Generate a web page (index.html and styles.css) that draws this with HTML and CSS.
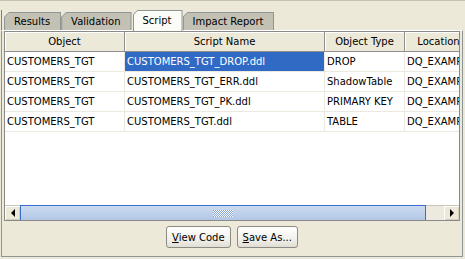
FILE: index.html
```html
<!DOCTYPE html>
<html>
<head>
<meta charset="utf-8">
<link rel="stylesheet" href="styles.css">
</head>
<body>
<div class="frame">
  <div class="tabs">
    <div class="edge"></div>
    <div class="tab"><span>Results</span></div>
    <div class="tab"><span>Validation</span></div>
    <div class="tab sel"><span>Script</span></div>
    <div class="tab"><span>Impact Report</span></div>
  </div>
  <div class="panel">
    <div class="pane">
      <div class="viewport">
        <table class="grid">
          <colgroup>
            <col class="c1"><col class="c2"><col class="c3"><col class="c4">
          </colgroup>
          <thead>
            <tr><th>Object</th><th>Script Name</th><th>Object Type</th><th>Location</th></tr>
          </thead>
          <tbody>
            <tr><td>CUSTOMERS_TGT</td><td class="selected">CUSTOMERS_TGT_DROP.ddl</td><td>DROP</td><td>DQ_EXAMPLES</td></tr>
            <tr><td>CUSTOMERS_TGT</td><td>CUSTOMERS_TGT_ERR.ddl</td><td>ShadowTable</td><td>DQ_EXAMPLES</td></tr>
            <tr><td>CUSTOMERS_TGT</td><td>CUSTOMERS_TGT_PK.ddl</td><td>PRIMARY KEY</td><td>DQ_EXAMPLES</td></tr>
            <tr><td>CUSTOMERS_TGT</td><td>CUSTOMERS_TGT.ddl</td><td>TABLE</td><td>DQ_EXAMPLES</td></tr>
          </tbody>
        </table>
      </div>
      <div class="hscroll">
        <div class="arrow-btn"><span class="tri-left"></span></div>
        <div class="thumb"><span class="grip"></span></div>
        <div class="track"></div>
        <div class="arrow-btn"><span class="tri-right"></span></div>
      </div>
    </div>
    <div class="buttons">
      <button class="btn"><u>V</u>iew Code</button>
      <button class="btn"><u>S</u>ave As...</button>
    </div>
  </div>
</div>
</body>
</html>
```

FILE: styles.css
```css
html, body {
  margin: 0;
  padding: 0;
}
body {
  background: #ECE9D8;
  font-family: "DejaVu Sans", "Liberation Sans", sans-serif;
  font-size: 10px;
  color: #000;
}
.frame {
  width: 465px;
  height: 259px;
  display: flex;
  flex-direction: column;
  overflow: hidden;
}
.tabs {
  height: 30px;
  box-sizing: border-box;
  border-top: 1px solid #C4C1B2;
  display: flex;
  align-items: flex-end;
  padding-left: 1px;
}
.edge {
  width: 1px;
  height: 20px;
  background: #7F7F7F;
  margin-right: 2px;
}
.tab {
  height: 18px;
  box-sizing: border-box;
  padding: 1px 1px 0 1px;
  background: #8E9595;
  clip-path: polygon(0 5px, 5px 0, 100% 0, 100% 100%, 0 100%);
}
.tab span {
  display: block;
  height: 100%;
  box-sizing: border-box;
  background: #C2C1B4;
  padding: 0 10px 0 9px;
  line-height: 17px;
  white-space: nowrap;
  clip-path: polygon(0 4px, 4px 0, 100% 0, 100% 100%, 0 100%);
}
.tab.sel {
  height: 21px;
  margin-bottom: -1px;
  margin-left: 1px;
  position: relative;
  z-index: 2;
}
.tab.sel span {
  background: #FBFBF8;
  line-height: 19px;
  padding: 0 10px 0 9px;
}
.panel {
  height: 227px;
  box-sizing: border-box;
  margin: 0 2px 2px 1px;
  border: 1px solid #8E9595;
  border-top-color: #FFFFFF;
  padding: 0 2px;
  display: flex;
  flex-direction: column;
  position: relative;
  z-index: 1;
}
.pane {
  height: 190px;
  box-sizing: border-box;
  border: 1px solid #8A8A8A;
  display: flex;
  flex-direction: column;
  background: #fff;
}
.viewport {
  height: 173px;
  overflow: hidden;
  background: #fff;
}
.grid {
  table-layout: fixed;
  width: 468px;
  border-collapse: separate;
  border-spacing: 0;
}
.c1 { width: 120px; }
.c2 { width: 200px; }
.c3 { width: 80px; }
.c4 { width: 68px; }
.grid th {
  height: 20px;
  box-sizing: border-box;
  background: #ECE9D8;
  font-weight: normal;
  text-align: center;
  padding: 0;
  border-right: 1px solid #8F8F8F;
  border-bottom: 1px solid #8F8F8F;
  box-shadow: inset 1px 1px 0 #FFFFFF;
  white-space: nowrap;
  overflow: hidden;
}
.grid td {
  height: 20px;
  box-sizing: border-box;
  padding: 0 0 0 2px;
  border-right: 1px solid #ECEADF;
  border-bottom: 1px solid #ECEADF;
  white-space: nowrap;
  overflow: hidden;
}
.grid td.selected {
  background: #316AC5;
  color: #fff;
}
.hscroll {
  height: 15px;
  display: flex;
  background: #ECE9D8;
}
.arrow-btn {
  width: 15px;
  box-sizing: border-box;
  background: #ECE9D8;
  border-top: 1px solid #C9C6B6;
  box-shadow: inset 1px 1px 0 #FFFFFF, inset -1px -1px 0 #D2CFC0;
  display: flex;
  align-items: center;
  justify-content: center;
}
.tri-left {
  width: 0;
  height: 0;
  border-top: 4px solid transparent;
  border-bottom: 4px solid transparent;
  border-right: 4px solid #000;
}
.tri-right {
  width: 0;
  height: 0;
  border-top: 4px solid transparent;
  border-bottom: 4px solid transparent;
  border-left: 4px solid #000;
}
.thumb {
  width: 406px;
  box-sizing: border-box;
  border: 1px solid #3B6ECC;
  border-bottom: none;
  background: linear-gradient(#CBDBF0, #B3C7E5);
  display: flex;
  align-items: center;
  justify-content: center;
}
.grip {
  width: 20px;
  height: 7px;
  background: repeating-conic-gradient(#F4F8FD 0 25%, #8FA9D6 0 50%) 0 0 / 2px 2px;
}
.track {
  width: 18px;
  background: #ECEADF;
  border-top: 1px solid #C9C6B6;
  box-sizing: border-box;
}
.buttons {
  display: flex;
  justify-content: center;
  gap: 6px;
  padding-top: 5px;
}
.btn {
  height: 22px;
  box-sizing: border-box;
  padding: 0 5px;
  font-family: "DejaVu Sans", "Liberation Sans", sans-serif;
  font-size: 10px;
  color: #000;
  border: 1px solid #8B8A84;
  border-radius: 3px;
  background: linear-gradient(#FFFFFF, #F2F1EB 60%, #E0DED3);
}
.btn u {
  text-decoration: underline;
}
```
